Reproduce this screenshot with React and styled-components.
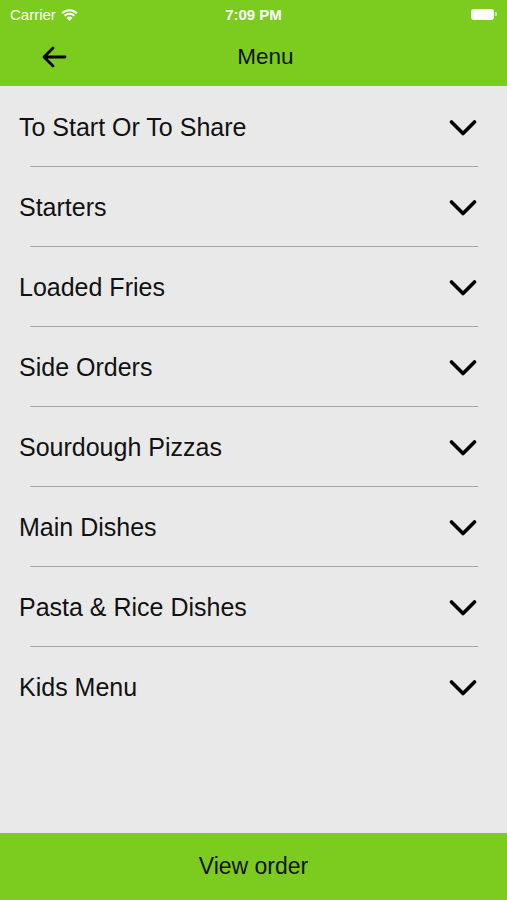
import React from "react";
import styled, { createGlobalStyle } from "styled-components";

const GlobalStyle = createGlobalStyle`
  html, body {
    margin: 0;
    padding: 0;
    background: #e9e9e9;
  }
  * {
    box-sizing: border-box;
  }
`;

const Screen = styled.div`
  width: 507px;
  height: 900px;
  display: flex;
  flex-direction: column;
  background: #e9e9e9;
  font-family: "Liberation Sans", Arial, sans-serif;
  color: #000;
`;

const TopBar = styled.div`
  background: #7ccc1f;
  height: 86px;
  display: flex;
  flex-direction: column;
`;

const StatusBar = styled.div`
  height: 28px;
  display: grid;
  grid-template-columns: 1fr auto 1fr;
  align-items: center;
  padding: 0 10px;
  color: #fff;
  font-size: 15px;
`;

const Carrier = styled.div`
  display: flex;
  align-items: center;
  gap: 5px;
`;

const Clock = styled.div`
  font-weight: bold;
  font-size: 15px;
`;

const Battery = styled.div`
  justify-self: end;
  display: flex;
  align-items: center;
  gap: 1px;
`;

const BatteryBody = styled.div`
  width: 23px;
  height: 11px;
  border-radius: 3px;
  background: #fff;
`;

const BatteryTip = styled.div`
  width: 2px;
  height: 4px;
  border-radius: 0 1px 1px 0;
  background: rgba(255, 255, 255, 0.6);
`;

const NavBar = styled.div`
  flex: 1;
  display: grid;
  grid-template-columns: 80px 1fr 80px;
  align-items: center;
  padding-bottom: 1px;
`;

const BackButton = styled.div`
  display: flex;
  align-items: center;
  padding-left: 41px;
`;

const Title = styled.div`
  text-align: center;
  padding-left: 24px;
  font-size: 22.5px;
  color: #111;
`;

const List = styled.div`
  flex: 1;
  display: flex;
  flex-direction: column;
  padding-top: 1px;
`;

const Row = styled.div`
  height: 79px;
  display: flex;
  align-items: center;
  justify-content: space-between;
  padding: 2px 30px 0 19px;
`;

const Label = styled.span`
  font-size: 25px;
  color: #111;
`;

const Divider = styled.div`
  height: 1px;
  margin: 0 29px 0 30px;
  background: #a6a6a6;
`;

const Footer = styled.div`
  height: 67px;
  background: #7ccc1f;
  display: flex;
  align-items: center;
  justify-content: center;
  font-size: 23px;
  color: #111;
`;

const Wifi = () => (
  <svg width="17" height="13" viewBox="0 0 17 13">
    <path d="M8.5 13 L5.6 9.9 A4.2 4.2 0 0 1 11.4 9.9 Z" fill="#fff" />
    <path d="M3.6 7.8 A7 7 0 0 1 13.4 7.8" stroke="#fff" strokeWidth="2" fill="none" />
    <path d="M1.2 5.2 A10.5 10.5 0 0 1 15.8 5.2" stroke="#fff" strokeWidth="2" fill="none" />
  </svg>
);

const BackArrow = () => (
  <svg width="26" height="22" viewBox="0 0 26 22">
    <path
      d="M24 11 H3 M12 2 L3 11 L12 20"
      stroke="#000"
      strokeWidth="2.8"
      fill="none"
      strokeLinecap="round"
      strokeLinejoin="round"
    />
  </svg>
);

const Chevron = () => (
  <svg width="28" height="18" viewBox="0 0 28 18">
    <path
      d="M2.5 3 L14 14.5 L25.5 3"
      stroke="#000"
      strokeWidth="3.6"
      fill="none"
      strokeLinecap="round"
      strokeLinejoin="round"
    />
  </svg>
);

const sections = [
  "To Start Or To Share",
  "Starters",
  "Loaded Fries",
  "Side Orders",
  "Sourdough Pizzas",
  "Main Dishes",
  "Pasta & Rice Dishes",
  "Kids Menu",
];

const App = () => {
  return (
    <Screen>
      <GlobalStyle />
      <TopBar>
        <StatusBar>
          <Carrier>
            Carrier <Wifi />
          </Carrier>
          <Clock>7:09 PM</Clock>
          <Battery>
            <BatteryBody />
            <BatteryTip />
          </Battery>
        </StatusBar>
        <NavBar>
          <BackButton>
            <BackArrow />
          </BackButton>
          <Title>Menu</Title>
          <div />
        </NavBar>
      </TopBar>
      <List>
        {sections.map((name, i) => (
          <React.Fragment key={name}>
            <Row>
              <Label>{name}</Label>
              <Chevron />
            </Row>
            {i < sections.length - 1 && <Divider />}
          </React.Fragment>
        ))}
      </List>
      <Footer>View order</Footer>
    </Screen>
  );
};

export default App;
